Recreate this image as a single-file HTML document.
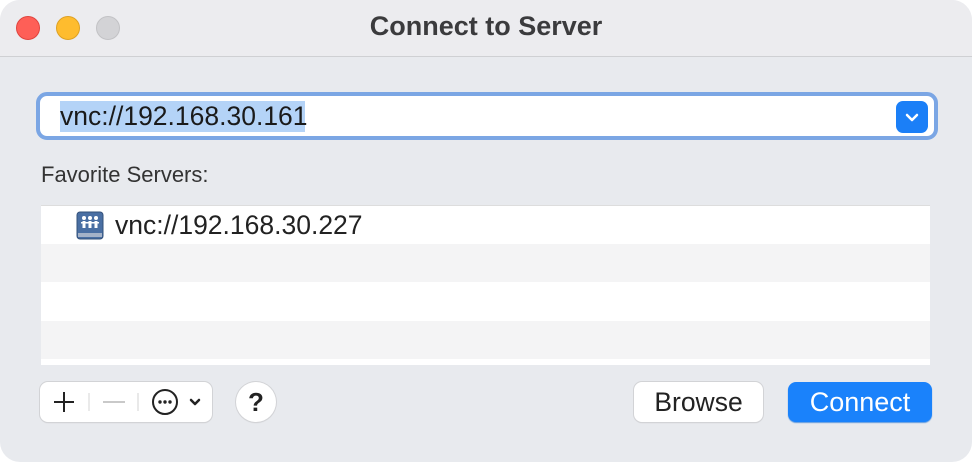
<!DOCTYPE html>
<html><head><style>
body{margin:0;width:972px;height:462px;background:#fff;font-family:"Liberation Sans",sans-serif;overflow:hidden}
.win{position:absolute;left:0;top:0;width:972px;height:462px;background:#e8eaee;border-radius:20px;overflow:hidden}
.title{position:absolute;left:0;top:0;width:972px;height:56px;background:#ececef;border-bottom:1px solid #cfd0d3}
.title .t{position:absolute;width:972px;text-align:center;top:11px;font-size:27px;font-weight:bold;color:#3b3b3d}
.tl{position:absolute;top:16px;width:24px;height:24px;border-radius:50%;box-sizing:border-box}
.inp{position:absolute;left:36px;top:92px;width:902px;height:48px;box-sizing:border-box;border:4px solid #7ba6e4;border-radius:11px;background:#fff}
.inp .sel{position:absolute;left:20px;top:5px;height:31px;width:245px;background:#b4d3f7}
.inp .tx{position:absolute;left:20px;top:5px;font-size:26.5px;color:#1a1a1a}
.dd{position:absolute;left:856px;top:5px;width:32px;height:32px;background:#1b7ff7;border-radius:7px}
.lbl{position:absolute;left:41px;top:162px;font-size:22px;color:#333}
.list{position:absolute;left:41px;top:205px;width:889px;height:159px;background:#fff;border-top:1px solid #ddd}
.row{position:absolute;left:0;width:889px;height:38px}
.btn{position:absolute;top:382px;height:40px;box-sizing:border-box;background:#fff;border-radius:8px;box-shadow:0 0 0 1px #d2d3d6,0 1px 1px #c8c9cc;font-size:26.5px;text-align:center;line-height:40px;color:#222}
</style></head><body>
<div class="win">
<div class="title">
<div class="tl" style="left:16px;background:#fe5f57;border:1px solid #e0443e"></div>
<div class="tl" style="left:56px;background:#febc2e;border:1px solid #dea123"></div>
<div class="tl" style="left:96px;background:#d3d3d6;border:1px solid #c2c2c5"></div>
<div class="t">Connect to Server</div>
</div>
<div class="inp"><div class="sel"></div><div class="tx">vnc://192.168.30.161</div>
<div class="dd"><svg width="32" height="32"><path d="M11 14l5 5 5-5" stroke="#fff" stroke-width="2.5" fill="none" stroke-linecap="round" stroke-linejoin="round"/></svg></div></div>
<div class="lbl">Favorite Servers:</div>
<div class="list">
<div class="row" style="top:0"><svg style="position:absolute;left:35px;top:5px" width="28" height="30"><rect x="1" y="1" width="26" height="27" rx="3" fill="#4a6fa3" stroke="#33507a"/><rect x="2" y="22" width="24" height="4" fill="#a4b2c8"/><g fill="#fff"><circle cx="8" cy="7" r="2"/><circle cx="14" cy="7" r="2"/><circle cx="20" cy="7" r="2"/><rect x="6.5" y="10" width="3" height="7"/><rect x="12.5" y="10" width="3" height="7"/><rect x="18.5" y="10" width="3" height="7"/><rect x="5" y="11" width="18" height="1.5"/></g></svg><div style="position:absolute;left:74px;top:4px;font-size:26.5px;color:#222">vnc://192.168.30.227</div></div>
<div class="row" style="top:38px;background:#f4f4f5"></div>
<div class="row" style="top:115px;background:#f4f4f5"></div>
</div>
<div class="btn" style="left:40px;width:172px">
<svg width="172" height="40" style="position:absolute;left:0;top:0"><g stroke="#222" stroke-width="2" fill="none"><path d="M14 20h20M24 10v20"/></g><path d="M49 11v18M98 11v18" stroke="#e2e2e2" stroke-width="1.5"/><path d="M63 20h22" stroke="#c9c9c9" stroke-width="2"/><circle cx="125" cy="20" r="12" stroke="#222" stroke-width="2" fill="none"/><g fill="#222"><circle cx="120" cy="20" r="1.7"/><circle cx="125" cy="20" r="1.7"/><circle cx="130" cy="20" r="1.7"/></g><path d="M151 18l4 4 4-4" stroke="#222" stroke-width="2.5" fill="none" stroke-linecap="round" stroke-linejoin="round"/></svg></div>
<div class="btn" style="left:236px;width:40px;border-radius:50%;font-weight:bold;font-size:26px">?</div>
<div class="btn" style="left:634px;width:129px">Browse</div>
<div class="btn" style="left:788px;width:144px;background:#1a82fb;color:#fff;box-shadow:0 1px 1px #5c9ae0;font-size:27px">Connect</div>
</div>
</body></html>
